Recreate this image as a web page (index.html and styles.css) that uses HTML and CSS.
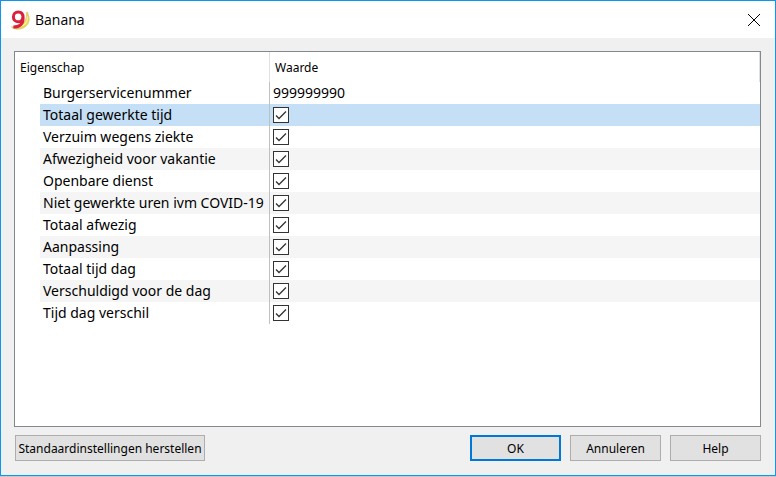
FILE: index.html
```html
<!DOCTYPE html>
<html lang="nl">
<head>
<meta charset="utf-8">
<title>Banana</title>
<link rel="stylesheet" href="styles.css">
</head>
<body>
<main class="window">
  <header class="titlebar">
    <svg class="logo" viewBox="0 0 20 20" aria-hidden="true">
      <path d="M16.300 2.500l1.300-.4c.2 1.200.5 2 .9 3 1.200 3.500 1 7.300-1.800 10.300-3.600 3.900-9.600 5-14.700 2.300l-.5-1c4.700.6 9.300-.8 12.200-4.200 2.600-3.100 3.200-6.400 2.600-10z" fill="#ead650" stroke="#cdb66a" stroke-width=".5"/>
      <path d="M17.300 6.500c.5 3.600-1 6.600-3.700 8.600-2.400 1.800-5.200 2.500-8.400 2.300" fill="none" stroke="#f8efa8" stroke-width="1.200"/>
      <path d="M12.800 7.200c0 2.700-1.900 4.600-4.500 4.600S3.400 9.900 3.400 6.900 5.400 2.100 8.200 2.100c3 0 4.900 2.200 4.900 5.800 0 5.600-3.400 9-9.700 9.200" fill="none" stroke="#dc1f3a" stroke-width="3"/>
    </svg>
    <h1 class="title">Banana</h1>
    <button class="close" type="button" aria-label="Sluiten">
      <svg viewBox="0 0 12 12" aria-hidden="true"><path d="M0 0L12 12M12 0L0 12"/></svg>
    </button>
  </header>
  <form class="content">
    <div class="panel">
      <table class="properties">
        <colgroup><col class="col-name"><col></colgroup>
        <thead>
          <tr><th scope="col">Eigenschap</th><th scope="col">Waarde</th></tr>
        </thead>
        <tbody>
          <tr><td><label for="p0">Burgerservicenummer</label></td><td><input class="value" id="p0" type="text" value="999999990"></td></tr>
          <tr class="selected"><td><label for="p1">Totaal gewerkte tijd</label></td><td><input class="check" id="p1" type="checkbox" checked></td></tr>
          <tr><td><label for="p2">Verzuim wegens ziekte</label></td><td><input class="check" id="p2" type="checkbox" checked></td></tr>
          <tr><td><label for="p3">Afwezigheid voor vakantie</label></td><td><input class="check" id="p3" type="checkbox" checked></td></tr>
          <tr><td><label for="p4">Openbare dienst</label></td><td><input class="check" id="p4" type="checkbox" checked></td></tr>
          <tr><td><label for="p5">Niet gewerkte uren ivm COVID-19</label></td><td><input class="check" id="p5" type="checkbox" checked></td></tr>
          <tr><td><label for="p6">Totaal afwezig</label></td><td><input class="check" id="p6" type="checkbox" checked></td></tr>
          <tr><td><label for="p7">Aanpassing</label></td><td><input class="check" id="p7" type="checkbox" checked></td></tr>
          <tr><td><label for="p8">Totaal tijd dag</label></td><td><input class="check" id="p8" type="checkbox" checked></td></tr>
          <tr><td><label for="p9">Verschuldigd voor de dag</label></td><td><input class="check" id="p9" type="checkbox" checked></td></tr>
          <tr><td><label for="p10">Tijd dag verschil</label></td><td><input class="check" id="p10" type="checkbox" checked></td></tr>
        </tbody>
      </table>
    </div>
    <footer class="actions">
      <button class="btn btn-wide" type="reset">Standaardinstellingen herstellen</button>
      <button class="btn btn-default" type="submit">OK</button>
      <button class="btn" type="button">Annuleren</button>
      <button class="btn" type="button">Help</button>
    </footer>
  </form>
</main>
</body>
</html>
```
FILE: styles.css
```css
* {
  box-sizing: border-box;
}

body {
  margin: 0;
  min-height: 100vh;
  display: flex;
  flex-direction: column;
  background: #c8c8c8;
  padding-bottom: 1px;
  color: #000;
  font-family: "Noto Sans", "Segoe UI", sans-serif;
  font-size: 12px;
}

.window {
  flex: 1;
  display: flex;
  flex-direction: column;
  border: 1px solid #0c96ef;
  background: #f0f0f0;
}

.titlebar {
  display: flex;
  align-items: center;
  height: 37px;
  padding: 0 15px 0 9px;
  background: #fff;
}

.logo {
  width: 20px;
  height: 20px;
}

.title {
  flex: 1;
  margin: 0 0 0 5px;
  font-family: "Open Sans", "Segoe UI", sans-serif;
  font-size: 14px;
  font-weight: 400;
}

.close {
  display: flex;
  padding: 0;
  border: 0;
  background: none;
}

.close svg {
  width: 12px;
  height: 12px;
  overflow: visible;
  stroke: #000;
  stroke-width: 1;
}

.content {
  flex: 1;
  display: flex;
  flex-direction: column;
  gap: 8px;
  padding: 13px 14px 14px 13px;
}

.panel {
  flex: 1;
  border: 1px solid #828790;
  background: #fff;
}

.properties {
  width: 100%;
  table-layout: fixed;
  border-collapse: separate;
  border-spacing: 0;
}

.col-name {
  width: 255px;
}

.properties th {
  height: 30px;
  padding: 0 5px;
  border-right: 1px solid #e0e0e0;
  font-weight: 400;
  text-align: left;
}

.properties td {
  height: 22px;
  padding: 0 0 0 3px;
  font-size: 14px;
  line-height: 22px;
  white-space: nowrap;
}

.properties td:first-child {
  padding-left: 25px;
  border-right: 1px solid #c0c0c0;
}

.properties label {
  display: block;
  padding-left: 3px;
}

.properties tbody tr:nth-child(even) label,
.properties tbody tr:nth-child(even) td:last-child {
  background: #f5f5f5;
}

.properties tbody tr.selected label,
.properties tbody tr.selected td:last-child {
  background: #c5dff6;
}

.value {
  display: block;
  width: 100%;
  height: 22px;
  padding: 0;
  border: 0;
  background: none;
  color: inherit;
  font: inherit;
}

.check {
  appearance: none;
  display: block;
  width: 16px;
  height: 16px;
  margin: 0;
  border: 1px solid #333;
  background: #fff;
}

.check:checked {
  background: #fff url("data:image/svg+xml,%3Csvg xmlns='http://www.w3.org/2000/svg' viewBox='0 0 14 14'%3E%3Cpath d='M2 7.500l3 3L12 3.500' fill='none' stroke='%23333' stroke-width='1.300'/%3E%3C/svg%3E") center / 14px 14px no-repeat;
}

.actions {
  display: flex;
  gap: 9px;
}

.btn {
  width: 91px;
  height: 26px;
  padding: 0;
  border: 1px solid #adadad;
  background: #e1e1e1;
  color: #000;
  font: inherit;
  white-space: nowrap;
}

.btn-wide {
  width: 190px;
  margin: 0 auto 0 1px;
}

.btn-default {
  border: 2px solid #0078d7;
}
```
